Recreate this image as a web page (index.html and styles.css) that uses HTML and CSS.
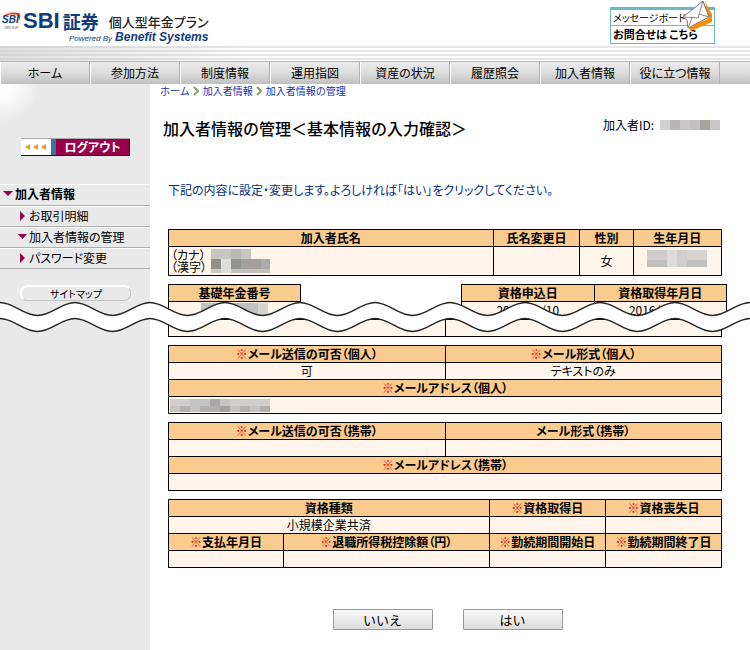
FILE: index.html
```html
<!DOCTYPE html>
<html lang="ja">
<head>
    <meta charset="UTF-8">
    <meta name="viewport" content="width=device-width, initial-scale=1.0">
    <title>加入者情報の管理</title>
    <link rel="stylesheet" href="styles.css">
</head>
<body>
    <div class="page">
        <header class="header">
            <div class="logo">
                <svg class="logo-mark" width="20" height="18" viewBox="0 0 20 18">
                    <path d="M1 5 Q7 -1 18 1 Q20 3 19 6 L17 11 Q19 5 16 3 Q8 1 1 5Z" fill="#e8401c"/>
                    <text x="1" y="11" class="mark-name">SBI</text>
                    <text x="3" y="17" class="mark-group">GROUP</text>
                </svg>
                <div class="logo-text">
                    <div class="logo-top">
                        <span class="logo-sbi">SBI</span><span class="logo-shoken">証券</span>
                        <span class="logo-plan">個人型年金プラン</span>
                    </div>
                    <div class="logo-sub"><i>Powered By</i><b>Benefit Systems</b></div>
                </div>
            </div>
            <div class="board">
                <a href="#">メッセージボード</a>
                <a href="#" class="board-contact">お問合せは こちら</a>
                <svg class="envelope" width="31" height="32" viewBox="0 0 31 32">
                    <path d="M23 2 L30 14 L30 22 L9 31 L6 27 L26 19Z" fill="#ff8c00"/>
                    <path d="M21 1 L27 17 L6 28 L5 20 L1 17Z" fill="#fff" stroke="#777" stroke-width="1"/>
                    <path d="M1 17 L16 18 L21 1 M6 28 L10 18 M27 17 L17 14" fill="none" stroke="#888" stroke-width="1"/>
                </svg>
            </div>
        </header>
        <div class="stripes"></div>
        <nav class="nav">
            <a href="#">ホーム</a>
            <a href="#">参加方法</a>
            <a href="#">制度情報</a>
            <a href="#">運用指図</a>
            <a href="#">資産の状況</a>
            <a href="#">履歴照会</a>
            <a href="#">加入者情報</a>
            <a href="#">役に立つ情報</a>
        </nav>

        <div class="columns">
            <aside class="sidebar">
                <a href="#" class="logout">
                    <svg class="logout-arrows" width="30" height="16" viewBox="0 0 30 16">
                        <path d="M4 8l5-3v6z M12 8l5-3v6z M20 8l5-3v6z" fill="#f7941d"/>
                    </svg>
                    <span>ログアウト</span>
                </a>
                <ul class="menu">
                    <li class="menu-head"><a href="#"><svg width="10" height="6"><path d="M0 0h10l-5 5z"/></svg>加入者情報</a></li>
                    <li><a href="#"><svg width="10" height="10"><path d="M3 0l5 5-5 5z"/></svg>お取引明細</a></li>
                    <li><a href="#"><svg width="10" height="6"><path d="M1 0h9l-4.500 5z"/></svg>加入者情報の管理</a></li>
                    <li><a href="#"><svg width="10" height="10"><path d="M3 0l5 5-5 5z"/></svg>パスワード変更</a></li>
                </ul>
                <a href="#" class="sitemap">サイトマップ</a>
            </aside>

            <main class="main">
                <div class="breadcrumb">
                    <a href="#">ホーム</a>
                    <svg width="7" height="10"><path d="M1 1l4 4-4 4"/></svg>
                    <a href="#">加入者情報</a>
                    <svg width="7" height="10"><path d="M1 1l4 4-4 4"/></svg>
                    <a href="#">加入者情報の管理</a>
                </div>
                <div class="title-row">
                    <h1>加入者情報の管理＜基本情報の入力確認＞</h1>
                    <div class="member-id">加入者ID:
                        <svg width="60" height="10">
                            <rect width="60" height="10" fill="#c9c7c8"/>
                            <rect width="10" height="10" fill="#d2d0d1"/>
                            <rect x="10" width="10" height="10" fill="#bab6b8"/>
                            <rect x="30" width="10" height="10" fill="#c2c0c1"/>
                            <rect x="40" width="10" height="10" fill="#a7a4a0"/>
                        </svg>
                    </div>
                </div>

                <form class="form">
                    <p class="notice">下記の内容に設定・変更します。よろしければ「はい」をクリックしてください。</p>

                    <table class="list">
                        <colgroup><col class="w-name"><col class="w-change"><col class="w-sex"><col></colgroup>
                        <tr><th>加入者氏名</th><th>氏名変更日</th><th>性別</th><th>生年月日</th></tr>
                        <tr class="tall">
                            <td>
                                <div class="name">
                                    <div>（カナ）<br>（漢字）</div>
                                    <svg width="59" height="24">
                                        <rect width="40" height="10" fill="#c8c6c2"/>
                                        <rect x="20" width="10" height="10" fill="#bbb9b8"/>
                                        <rect y="10" width="10" height="10" fill="#8f9189"/>
                                        <rect x="10" y="10" width="10" height="14" fill="#dedfd8"/>
                                        <rect x="20" y="10" width="10" height="10" fill="#91938c"/>
                                        <rect x="30" y="10" width="20" height="10" fill="#a39f9b"/>
                                        <rect x="50" y="10" width="9" height="10" fill="#adaaaa"/>
                                        <rect y="20" width="10" height="4" fill="#c9c9c5"/>
                                        <rect x="20" y="20" width="39" height="4" fill="#c3c1c0"/>
                                    </svg>
                                </div>
                            </td>
                            <td></td>
                            <td>女</td>
                            <td>
                                <svg class="birthday" width="60" height="17">
                                    <rect width="60" height="10" fill="#cfcecd"/>
                                    <rect x="20" width="10" height="17" fill="#dddcda"/>
                                    <rect x="40" width="20" height="10" fill="#d5d4d1"/>
                                    <rect y="10" width="20" height="7" fill="#c0bfbd"/>
                                    <rect x="30" y="10" width="10" height="7" fill="#cfcecd"/>
                                    <rect x="40" y="10" width="20" height="7" fill="#c4c2c1"/>
                                </svg>
                            </td>
                        </tr>
                    </table>

                    <div class="split">
                        <table class="list pension">
                            <tr><th>基礎年金番号</th></tr>
                            <tr>
                                <td>
                                    <svg class="number" width="67" height="14">
                                        <rect width="67" height="14" fill="#c3c1c0"/>
                                        <rect x="17" width="20" height="14" fill="#b5b2b1"/>
                                        <rect x="57" width="10" height="14" fill="#d5d4cf"/>
                                    </svg>
                                </td>
                            </tr>
                        </table>
                        <table class="list dates">
                            <tr><th>資格申込日</th><th>資格取得年月日</th></tr>
                            <tr><td>2016/08/10</td><td>2016/10/01</td></tr>
                        </table>
                    </div>

                    <table class="list hidden-part">
                        <tr><td></td><td></td></tr>
                    </table>

                    <table class="list">
                        <tr><th><span class="req">※</span>メール送信の可否（個人）</th><th><span class="req">※</span>メール形式（個人）</th></tr>
                        <tr><td>可</td><td>テキストのみ</td></tr>
                        <tr><th colspan="2"><span class="req">※</span>メールアドレス（個人）</th></tr>
                        <tr>
                            <td colspan="2" class="left">
                                <svg width="100" height="13">
                                    <rect width="100" height="13" fill="#c6c3c3"/>
                                    <rect width="20" height="7" fill="#d0cecd"/>
                                    <rect x="40" width="10" height="7" fill="#aaa7a6"/>
                                    <rect x="60" width="40" height="7" fill="#d0cdca"/>
                                    <rect x="10" y="7" width="10" height="6" fill="#b4afb0"/>
                                    <rect x="30" y="7" width="20" height="6" fill="#b3b1b0"/>
                                    <rect x="50" y="7" width="10" height="6" fill="#a3a1a0"/>
                                    <rect x="70" y="7" width="10" height="6" fill="#b5b1b1"/>
                                    <rect x="90" y="7" width="10" height="6" fill="#b2afae"/>
                                </svg>
                            </td>
                        </tr>
                    </table>

                    <table class="list">
                        <tr><th><span class="req">※</span>メール送信の可否（携帯）</th><th>メール形式（携帯）</th></tr>
                        <tr><td></td><td></td></tr>
                        <tr><th colspan="2"><span class="req">※</span>メールアドレス（携帯）</th></tr>
                        <tr><td colspan="2"></td></tr>
                    </table>

                    <table class="list">
                        <colgroup><col class="w-pay"><col class="w-tax"><col class="w-period"><col></colgroup>
                        <tr><th colspan="2">資格種類</th><th><span class="req">※</span>資格取得日</th><th><span class="req">※</span>資格喪失日</th></tr>
                        <tr><td colspan="2">小規模企業共済</td><td></td><td></td></tr>
                        <tr><th><span class="req">※</span>支払年月日</th><th><span class="req">※</span>退職所得税控除額（円）</th><th><span class="req">※</span>勤続期間開始日</th><th><span class="req">※</span>勤続期間終了日</th></tr>
                        <tr><td></td><td></td><td></td><td></td></tr>
                    </table>

                    <div class="buttons">
                        <button type="button">いいえ</button>
                        <button type="button">はい</button>
                    </div>
                </form>
            </main>
        </div>

        <!-- 省略を示す波線 -->
        <svg class="wave" width="100%" height="32">
            <defs>
                <pattern id="wave" width="75" height="32" patternUnits="userSpaceOnUse">
                    <path d="M0 1.5C14 1.5 23 14.5 37.5 14.5S61 1.5 75 1.5V17.5C61 17.5 52 30.5 37.5 30.5S14 17.5 0 17.5Z" fill="#fff"/>
                    <path d="M-1 1.5H0C14 1.5 23 14.5 37.5 14.5S61 1.5 75 1.5H76M-1 17.5H0C14 17.5 23 30.5 37.5 30.5S61 17.5 75 17.5H76" fill="none" stroke="#222" stroke-width="1.4"/>
                </pattern>
            </defs>
            <rect width="100%" height="32" fill="url(#wave)"/>
        </svg>
    </div>
</body>
</html>
```

FILE: styles.css
```css
body {
    margin: 0;
    background: #fff;
    color: #000;
    font-family: "Noto Sans CJK JP", sans-serif;
    font-size: 12px;
    font-feature-settings: "palt";
}
a {
    color: inherit;
    text-decoration: none;
}
.page {
    position: relative;
    display: flex;
    flex-direction: column;
    min-height: 100vh;
}

/* header */
.header {
    display: flex;
    justify-content: space-between;
    height: 46px;
    padding: 0 35px 0 1px;
}
.logo {
    display: flex;
    gap: 2px;
    padding-top: 10px;
}
.logo-mark {
    margin-top: 2px;
}
.mark-name {
    font: italic bold 10px "Liberation Sans", sans-serif;
    fill: #123c7c;
}
.mark-group {
    font: 4px "Liberation Sans", sans-serif;
    fill: #555;
}
.logo-top {
    display: flex;
    align-items: center;
    height: 22px;
    color: #103c7c;
}
.logo-sbi {
    font: bold 22px "Liberation Sans", sans-serif;
}
.logo-shoken {
    margin-left: 3px;
    font-size: 18px;
    font-weight: bold;
}
.logo-plan {
    margin-left: 10px;
    font-size: 13px;
    font-weight: 500;
    color: #222;
}
.logo-sub {
    display: flex;
    justify-content: flex-end;
    align-items: baseline;
    gap: 3px;
    font-family: "Liberation Sans", sans-serif;
    font-style: italic;
    line-height: 11px;
    color: #103c7c;
}
.logo-sub i {
    font-size: 8px;
}
.board {
    position: relative;
    display: flex;
    flex-direction: column;
    box-sizing: border-box;
    width: 105px;
    height: 37px;
    margin-top: 7px;
    border: 1px solid #6cb8c8;
    border-top-width: 3px;
}
.board a {
    padding-left: 2px;
    font-size: 10px;
    line-height: 15px;
    white-space: nowrap;
}
.board .board-contact {
    border-top: 1px solid #6cb8c8;
    font-size: 11px;
    line-height: 17px;
    font-weight: bold;
}
.envelope {
    position: absolute;
    top: -10px;
    right: 1px;
}
.stripes {
    height: 15px;
    background:
        linear-gradient(to right, rgba(200, 200, 200, 0.6), rgba(200, 200, 200, 0) 260px),
        repeating-linear-gradient(#e6e6e6 0, #e6e6e6 2px, #fff 2px, #fff 4px);
}

/* nav */
.nav {
    display: flex;
    height: 22px;
    border-top: 1px solid #b5b5b5;
    background: linear-gradient(#ebebeb, #dcdcdc 50%, #c0c0c0);
}
.nav a {
    box-sizing: border-box;
    flex: 0 0 12%;
    border-left: 1px solid #fff;
    border-right: 1px solid #b0b0b0;
    line-height: 22px;
    text-align: center;
}

/* sidebar */
.columns {
    display: flex;
    flex: 1;
}
.sidebar {
    flex: 0 0 150px;
    background: radial-gradient(circle at 0 0, #fff 10px, rgba(255, 255, 255, 0) 40px) #e9e9e9;
}
.logout {
    display: flex;
    box-sizing: border-box;
    width: 109px;
    height: 18px;
    margin: 54px 0 28px 21px;
    border-top: 1px solid #aaa;
    border-bottom: 1px solid #400;
    background: #fff;
}
.logout span {
    flex: 1;
    border-left: 5px solid #3d74a8;
    border-right: 1px solid #300;
    background: #99004c;
    color: #fff;
    font-weight: bold;
    line-height: 16px;
    text-align: center;
}
.menu {
    margin: 0;
    padding: 0;
    list-style: none;
}
.menu li {
    box-sizing: border-box;
    height: 21px;
    border-bottom: 1px solid #b0b0b0;
    box-shadow: inset 0 1px #fff;
}
.menu .menu-head {
    height: 22px;
    font-weight: bold;
}
.menu a {
    display: flex;
    align-items: center;
    gap: 2px;
    padding-left: 17px;
    line-height: 20px;
}
.menu .menu-head a {
    padding-left: 3px;
}
.menu path {
    fill: #99004c;
}
.sitemap {
    display: block;
    box-sizing: border-box;
    width: 111px;
    height: 16px;
    margin: 16px 0 0 20px;
    border: 1px solid #fff;
    border-width: 2px 1px 1px 2px;
    border-right-color: #c4c4c4;
    border-bottom-color: #c4c4c4;
    border-radius: 7px;
    font-size: 10px;
    line-height: 13px;
    text-align: center;
}

/* main */
.main {
    flex: 1;
    min-width: 0;
}
.breadcrumb {
    display: flex;
    align-items: center;
    gap: 3px;
    height: 14px;
    padding-left: 10px;
    color: #1733b0;
    font-size: 10px;
    line-height: 14px;
    font-feature-settings: normal;
}
.breadcrumb path {
    fill: none;
    stroke: #8a9a6a;
    stroke-width: 2;
}
.title-row {
    display: flex;
    justify-content: space-between;
    margin-top: 20px;
    padding: 0 30px 0 13px;
    line-height: 20px;
}
.title-row h1 {
    margin: 0;
    font-size: 16px;
    font-weight: 500;
    font-feature-settings: normal;
}
.member-id {
    display: flex;
    align-items: center;
    gap: 6px;
    line-height: 14px;
    height: 14px;
}
.form {
    padding: 0 23px 0 18px;
}
.notice {
    margin: 43px 0 30px;
    color: #003080;
    line-height: 18px;
}

/* tables */
.list {
    width: calc(100% - 5px);
    margin-bottom: 8px;
    border-collapse: collapse;
    table-layout: fixed;
    line-height: 16px;
}
.list th,
.list td {
    height: 16px;
    padding: 0;
    border: 1px solid #000;
    text-align: center;
    white-space: nowrap;
}
.list th {
    background: #f9cb8f;
}
.list td {
    background: #fff5eb;
}
.list svg {
    display: block;
}
.list .tall td {
    height: 28px;
}
.list .left {
    padding-left: 1px;
}
.req {
    color: #e00;
    font-weight: normal;
}
.name {
    display: flex;
    gap: 4px;
    padding-left: 2px;
    line-height: 12px;
    text-align: left;
}
.list .birthday,
.list .number {
    margin: 0 auto;
}
.list .birthday {
    margin-bottom: 6px;
}
.w-name {
    width: 58.7%;
}
.w-change {
    width: 15.7%;
}
.w-sex {
    width: 9.6%;
}
.w-pay {
    width: 20.8%;
}
.w-tax {
    width: 37.2%;
}
.w-period {
    width: 21%;
}
.split {
    display: flex;
    justify-content: space-between;
}
.split .list {
    margin-bottom: 0;
}
.split .pension {
    width: 133px;
}
.split .dates {
    width: 266px;
}

.buttons {
    display: flex;
    justify-content: center;
    gap: 30px;
    margin: 41px 0 20px;
}
.buttons button {
    width: 100px;
    height: 21px;
    padding: 0;
    border: 1px solid #999;
    border-radius: 1px;
    background: linear-gradient(#fafafa, #ebebeb 50%, #dcdcdc);
    font: 13px "Noto Sans CJK JP", sans-serif;
    line-height: 16px;
}

.wave {
    position: absolute;
    top: 301px;
    left: 0;
}
```
